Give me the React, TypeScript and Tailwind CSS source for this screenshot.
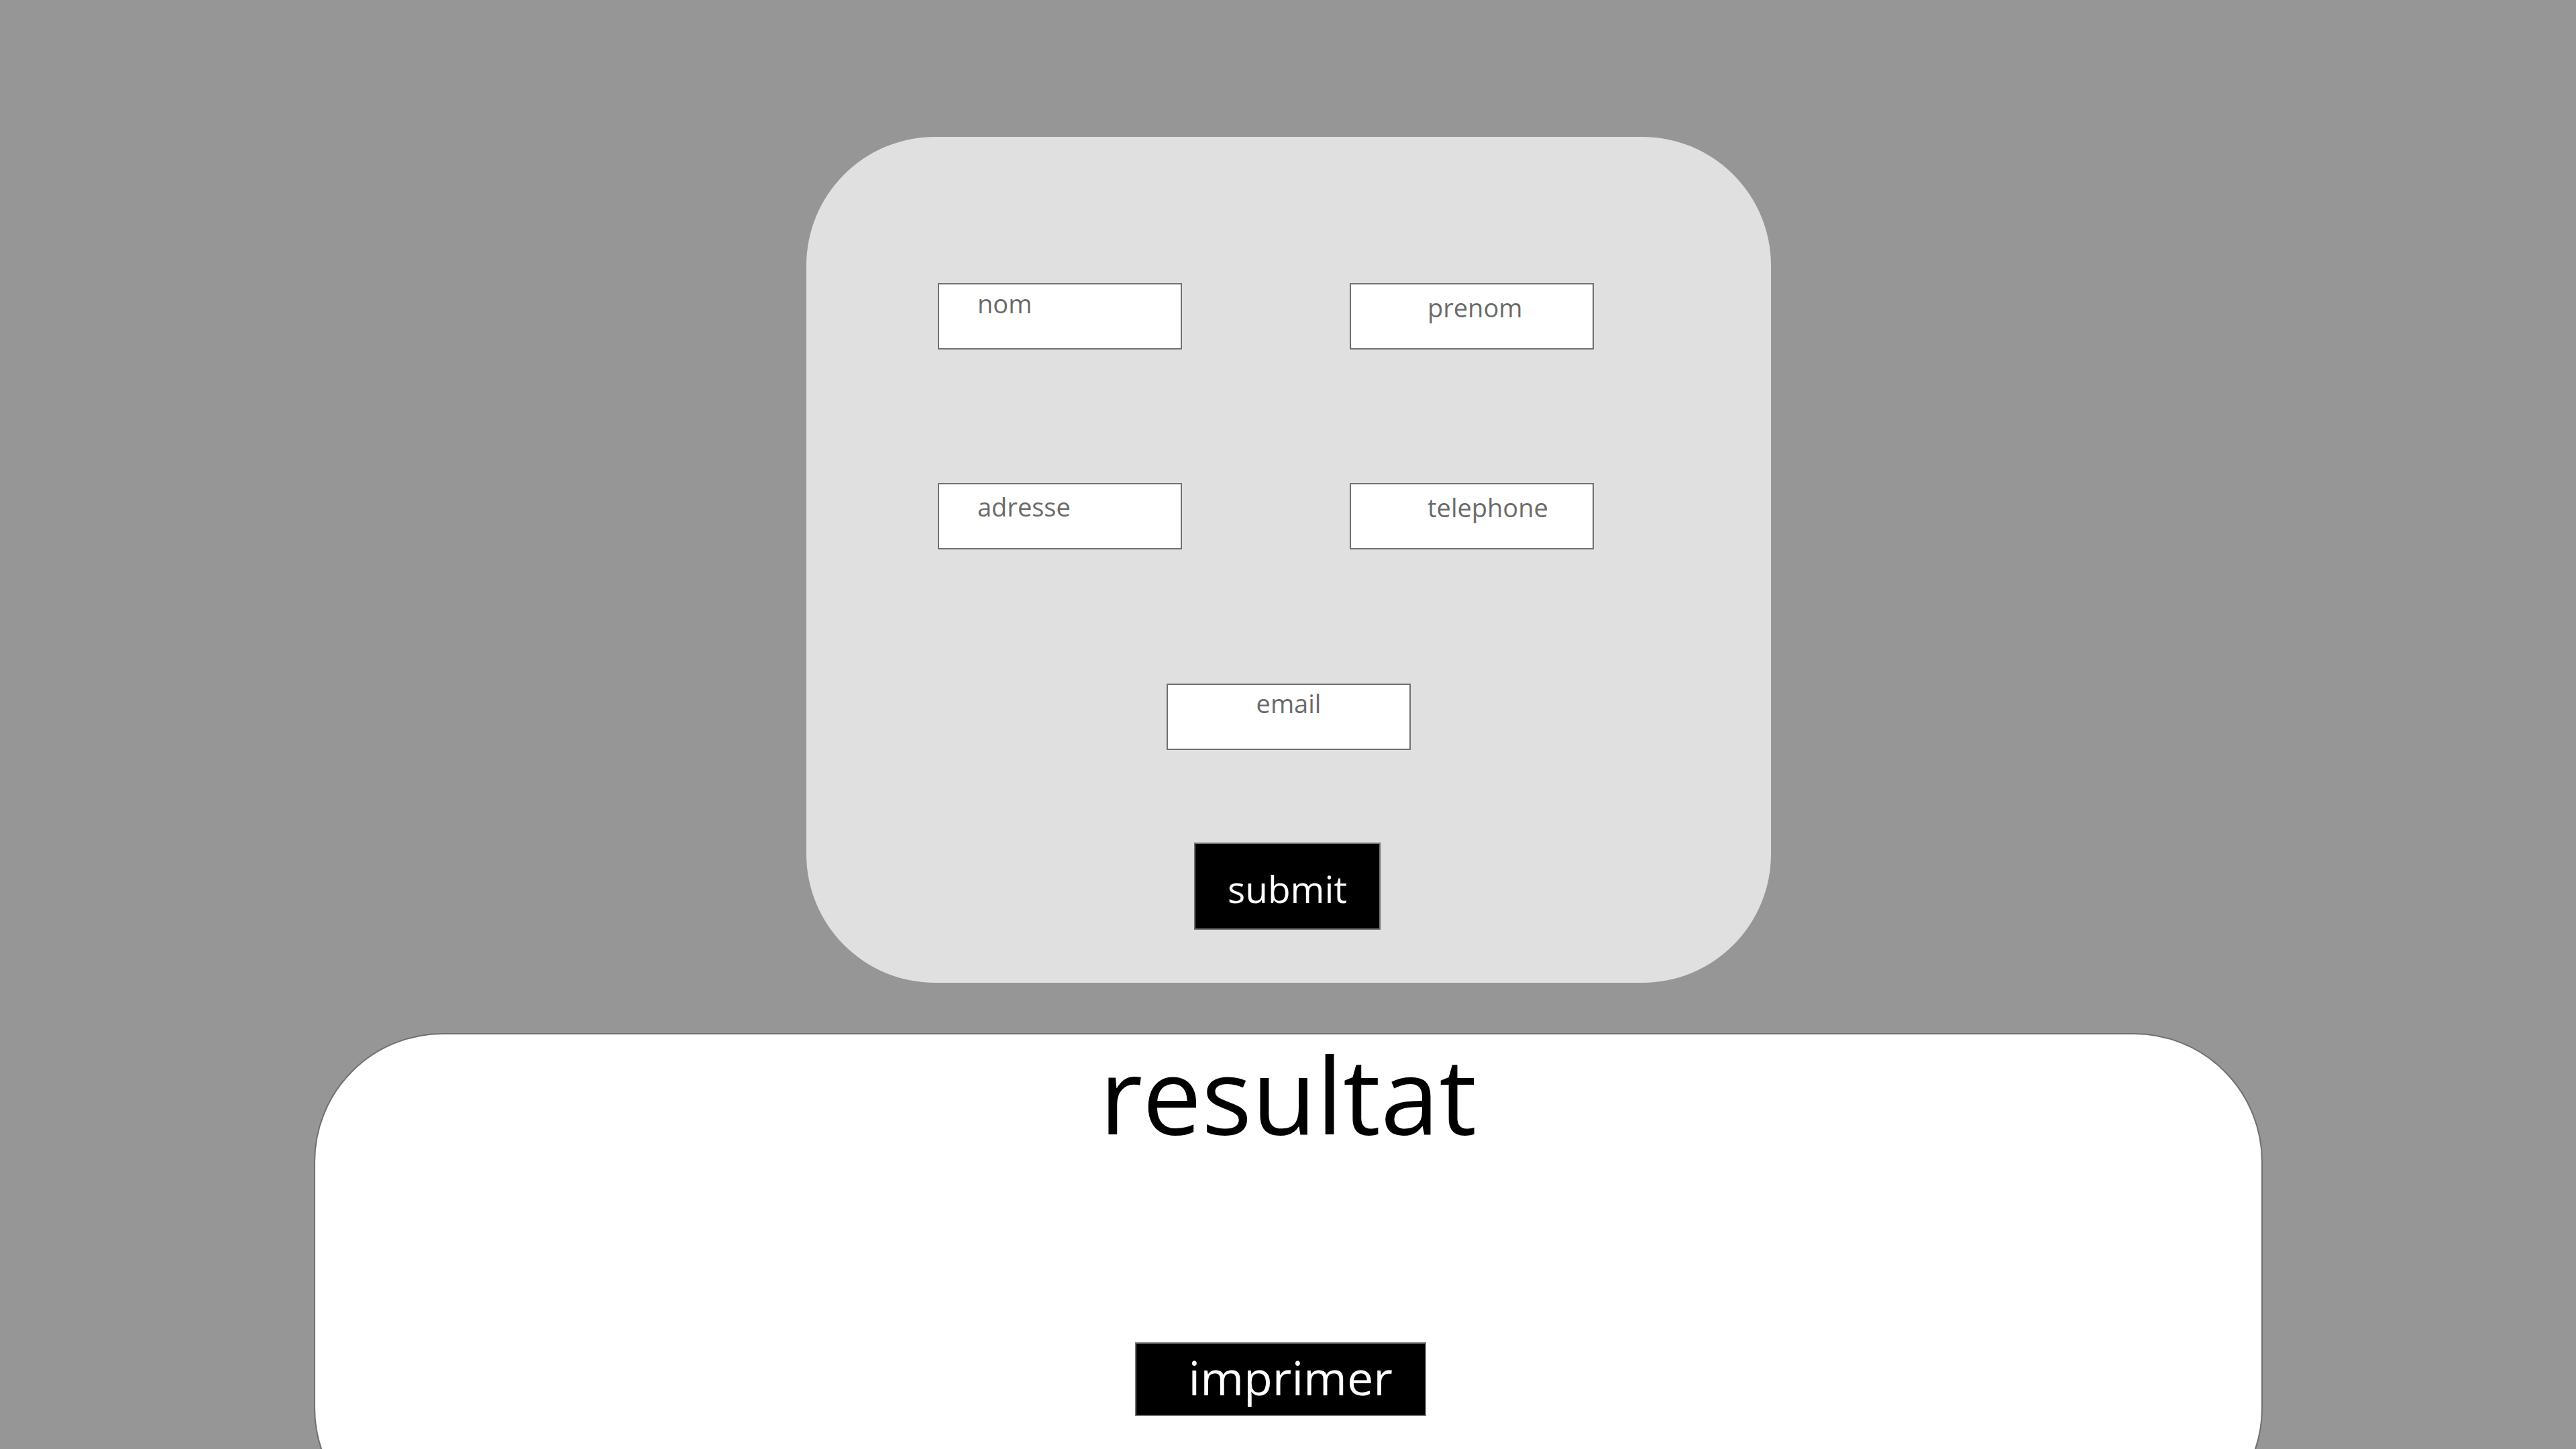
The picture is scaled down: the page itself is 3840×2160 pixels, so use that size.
import React from 'react';

const fields = [
    { label: 'nom', pad: 'pt-[9px] pl-[57px]' },
    { label: 'prenom', pad: 'pt-[15px] pl-[114px]' },
    { label: 'adresse', pad: 'pt-[14px] pl-[57px]' },
    { label: 'telephone', pad: 'pt-[15px] pl-[114px]' },
];

const Field: React.FC<{ label: string; pad: string; className?: string }> = ({ label, pad, className = '' }) => (
    <div className={`w-[364px] h-[99px] bg-white border-2 border-[#707070] text-[38px] leading-none text-[#6b6b6b] ${pad} ${className}`}>
        {label}
    </div>
);

const App: React.FC = () => {
    return (
        <div className="h-screen overflow-hidden bg-[#969696] pt-[204px] flex flex-col items-center font-['Open_Sans','Noto_Sans',sans-serif]">
            {/* form card */}
            <div className="w-[1438px] h-[1261px] shrink-0 bg-[#e0e0e0] rounded-[192px] pt-[218px] translate-x-[1px]">
                <div className="pl-[196px] grid grid-cols-[364px_364px] gap-x-[250px] gap-y-[199px]">
                    {fields.map(f => (
                        <Field key={f.label} label={f.label} pad={f.pad} />
                    ))}
                </div>
                <div className="mt-[200px] flex justify-center">
                    <Field label="email" pad="pt-[8px] text-center" className="w-[362px] h-[98px]" />
                </div>
                <div className="mt-[138px] flex justify-center">
                    <button className="w-[278px] h-[130px] -translate-x-[2px] bg-black border-2 border-[#707070] text-white text-[55px] leading-none pt-[6px]">
                        submit
                    </button>
                </div>
            </div>

            {/* result card */}
            <div className="mt-[75px] w-[2905px] h-[751px] shrink-0 bg-white border-2 border-[#707070] rounded-[192px]">
                <h1 className="pt-[10px] text-center text-[157px] leading-none text-black">resultat</h1>
                <div className="mt-[292px] flex justify-center pr-[23px]">
                    <button className="w-[434px] h-[110px] bg-black border-2 border-[#707070] text-white text-[70px] leading-none text-left pl-[78px] pt-[15px] flex items-start">
                        imprimer
                    </button>
                </div>
            </div>
        </div>
    );
};

export default App;
